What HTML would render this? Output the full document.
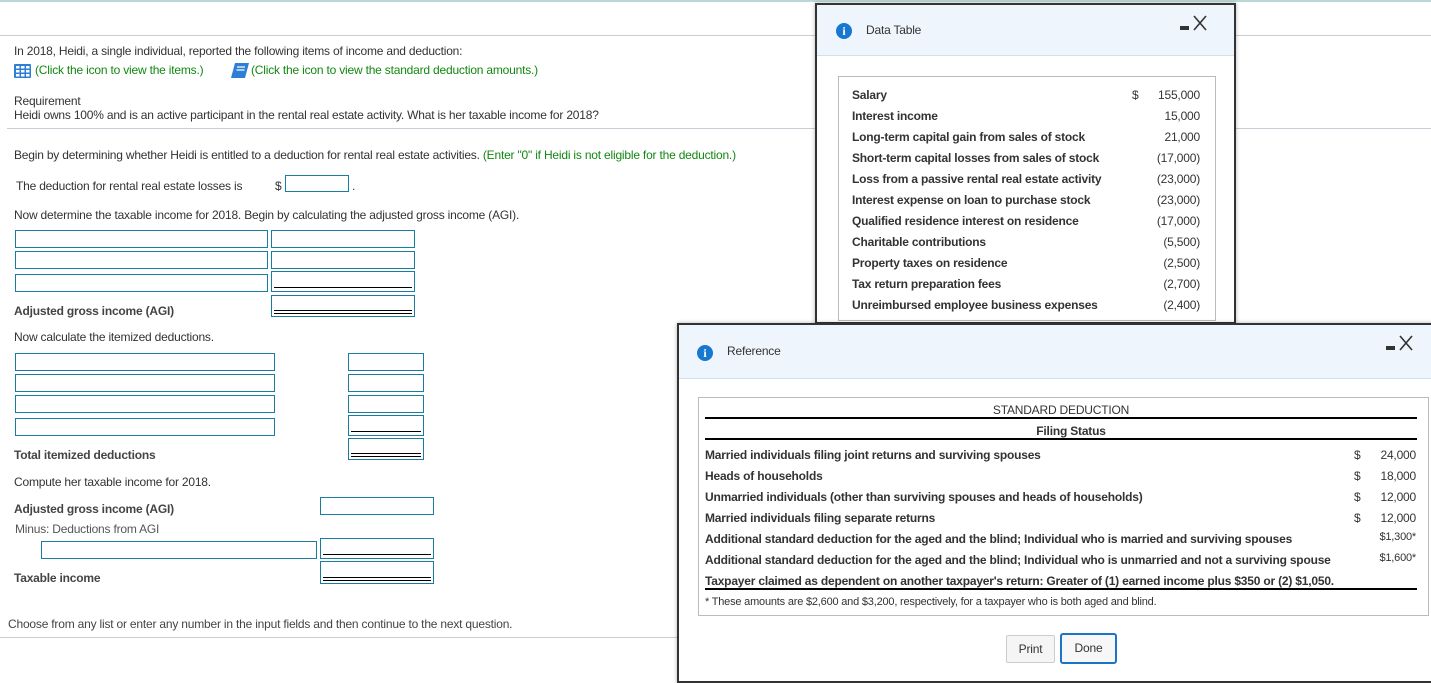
<!DOCTYPE html>
<html><head><meta charset="utf-8"><style>
*{margin:0;padding:0;box-sizing:border-box}
body{width:1431px;height:674px;position:relative;overflow:hidden;background:#fff;font-family:"Liberation Sans",sans-serif;font-size:12px;color:#333;letter-spacing:-0.2px}
.a{position:absolute;white-space:nowrap}
.b{position:absolute;border:1px solid #1a7ca0;background:#fff}
.u::after{content:"";position:absolute;left:2px;right:2px;bottom:3px;border-bottom:1px solid #000}
.d::after{content:"";position:absolute;left:2px;right:2px;bottom:2px;height:2px;border-top:1px solid #000;border-bottom:1px solid #000}
.g{color:#118811}
.bo{font-weight:bold;color:#444}
.hl{position:absolute;height:1px;background:#c9ccd4}
.dlg{position:absolute;background:#fff;border:2px solid #333;box-shadow:0 0 4px rgba(0,0,0,.3)}
.hdr{position:absolute;left:0;right:0;top:0;background:#eff5fd;border-bottom:1px solid #cfe0ee}
.ic{position:absolute;width:16px;height:16px;border-radius:50%;background:#1777d1;color:#fff;font:bold 12px "Liberation Serif",serif;text-align:center;line-height:16px;letter-spacing:0}
.tb{position:absolute;border:1px solid #bbb}
.r{position:absolute;font-size:12px;color:#333;white-space:nowrap}
</style></head><body>
<div class="a" style="left:0;top:0;width:1431px;height:2px;background:#b9d9d6"></div>
<div class="hl" style="left:0;top:35px;width:1431px"></div>
<div class="a" style="left:14px;top:44px">In 2018, Heidi, a single individual, reported the following items of income and deduction:</div>
<svg class="a" style="left:14px;top:64px" width="17" height="14"><rect x="0" y="0" width="17" height="14" rx="1" fill="#2d7fd6"/><g fill="#fff"><rect x="2" y="2" width="3.5" height="2.5"/><rect x="7" y="2" width="3.5" height="2.5"/><rect x="12" y="2" width="3.5" height="2.5"/><rect x="2" y="6" width="3.5" height="2.5"/><rect x="7" y="6" width="3.5" height="2.5"/><rect x="12" y="6" width="3.5" height="2.5"/><rect x="2" y="10" width="3.5" height="2.5"/><rect x="7" y="10" width="3.5" height="2.5"/><rect x="12" y="10" width="3.5" height="2.5"/></g></svg>
<div class="a g" style="left:35px;top:63px">(Click the icon to view the items.)</div>
<svg class="a" style="left:230px;top:62px" width="20" height="18"><path d="M5 1h14l-4 15H1z" fill="#2d7fd6"/><path d="M7 5h8M6.5 8h8" stroke="#fff" stroke-width="1.2"/></svg>
<div class="a g" style="left:251px;top:63px">(Click the icon to view the standard deduction amounts.)</div>
<div class="a" style="left:14px;top:94px">Requirement</div>
<div class="a" style="left:14px;top:108px">Heidi owns 100% and is an active participant in the rental real estate activity. What is her taxable income for 2018?</div>
<div class="hl" style="left:7px;top:128px;width:1424px"></div>
<div class="a" style="left:14px;top:148px">Begin by determining whether Heidi is entitled to a deduction for rental real estate activities. <span class="g">(Enter "0" if Heidi is not eligible for the deduction.)</span></div>
<div class="a" style="left:16px;top:179px">The deduction for rental real estate losses is</div>
<div class="a" style="left:275px;top:179px">$</div>
<div class="b" style="left:285px;top:175px;width:64px;height:17px"></div>
<div class="a" style="left:352px;top:179px">.</div>
<div class="a" style="left:14px;top:208px">Now determine the taxable income for 2018. Begin by calculating the adjusted gross income (AGI).</div>
<div class="b" style="left:15px;top:230px;width:253px;height:18px"></div>
<div class="b" style="left:271px;top:230px;width:144px;height:18px"></div>
<div class="b" style="left:15px;top:251px;width:253px;height:18px"></div>
<div class="b" style="left:271px;top:251px;width:144px;height:18px"></div>
<div class="b" style="left:15px;top:274px;width:253px;height:18px"></div>
<div class="b u" style="left:271px;top:271px;width:144px;height:21px"></div>
<div class="a bo" style="left:14px;top:304px">Adjusted gross income (AGI)</div>
<div class="b d" style="left:271px;top:295px;width:144px;height:22px"></div>
<div class="a" style="left:14px;top:330px">Now calculate the itemized deductions.</div>
<div class="b" style="left:15px;top:353px;width:260px;height:18px"></div>
<div class="b" style="left:348px;top:353px;width:76px;height:18px"></div>
<div class="b" style="left:15px;top:374px;width:260px;height:18px"></div>
<div class="b" style="left:348px;top:374px;width:76px;height:18px"></div>
<div class="b" style="left:15px;top:395px;width:260px;height:18px"></div>
<div class="b" style="left:348px;top:395px;width:76px;height:18px"></div>
<div class="b" style="left:15px;top:418px;width:260px;height:18px"></div>
<div class="b u" style="left:348px;top:415px;width:76px;height:21px"></div>
<div class="a bo" style="left:14px;top:448px">Total itemized deductions</div>
<div class="b d" style="left:348px;top:438px;width:76px;height:22px"></div>
<div class="a" style="left:14px;top:475px">Compute her taxable income for 2018.</div>
<div class="a bo" style="left:14px;top:502px">Adjusted gross income (AGI)</div>
<div class="b" style="left:320px;top:497px;width:114px;height:18px"></div>
<div class="a" style="left:15px;top:522px;color:#555">Minus: Deductions from AGI</div>
<div class="b" style="left:41px;top:541px;width:276px;height:18px"></div>
<div class="b u" style="left:320px;top:538px;width:114px;height:21px"></div>
<div class="a bo" style="left:14px;top:571px">Taxable income</div>
<div class="b d" style="left:320px;top:561px;width:114px;height:23px"></div>
<div class="a" style="left:8px;top:617px;color:#444">Choose from any list or enter any number in the input fields and then continue to the next question.</div>
<div class="hl" style="left:0;top:637px;width:680px"></div>

<div class="dlg" style="left:815px;top:3px;width:421px;height:321px">
 <div class="hdr" style="height:51px"></div>
 <div class="ic" style="left:19px;top:18px">i</div>
 <div class="a" style="left:49px;top:18px">Data Table</div>
 <div class="a" style="left:363px;top:21px;width:9px;height:4px;background:#333"></div>
 <svg class="a" style="left:375px;top:9px" width="16" height="18"><path d="M2 2L14 16M14 2L2 16" stroke="#333" stroke-width="1.6" fill="none"/></svg>
 <div class="tb" style="left:21px;top:71px;width:378px;height:245px"></div>
</div>
<div class="a" style="left:838px;top:76px;width:377px;height:250px;font-size:12px">
<div class="r bo" style="left:14px;top:12px;color:#333">Salary</div><div class="r" style="left:294px;top:12px">$</div><div class="r" style="right:15px;top:12px">155,000</div>
<div class="r" style="left:14px;top:33px;font-weight:bold">Interest income</div><div class="r" style="right:15px;top:33px">15,000</div>
<div class="r" style="left:14px;top:54px;font-weight:bold">Long-term capital gain from sales of stock</div><div class="r" style="right:15px;top:54px">21,000</div>
<div class="r" style="left:14px;top:75px;font-weight:bold">Short-term capital losses from sales of stock</div><div class="r" style="right:15px;top:75px">(17,000)</div>
<div class="r" style="left:14px;top:96px;font-weight:bold">Loss from a passive rental real estate activity</div><div class="r" style="right:15px;top:96px">(23,000)</div>
<div class="r" style="left:14px;top:117px;font-weight:bold">Interest expense on loan to purchase stock</div><div class="r" style="right:15px;top:117px">(23,000)</div>
<div class="r" style="left:14px;top:138px;font-weight:bold">Qualified residence interest on residence</div><div class="r" style="right:15px;top:138px">(17,000)</div>
<div class="r" style="left:14px;top:159px;font-weight:bold">Charitable contributions</div><div class="r" style="right:15px;top:159px">(5,500)</div>
<div class="r" style="left:14px;top:180px;font-weight:bold">Property taxes on residence</div><div class="r" style="right:15px;top:180px">(2,500)</div>
<div class="r" style="left:14px;top:201px;font-weight:bold">Tax return preparation fees</div><div class="r" style="right:15px;top:201px">(2,700)</div>
<div class="r" style="left:14px;top:222px;font-weight:bold">Unreimbursed employee business expenses</div><div class="r" style="right:15px;top:222px">(2,400)</div>
</div>

<div class="dlg" style="left:677px;top:323px;width:760px;height:360px">
 <div class="hdr" style="height:54px"></div>
 <div class="ic" style="left:18px;top:20px">i</div>
 <div class="a" style="left:48px;top:19px">Reference</div>
 <div class="a" style="left:707px;top:21px;width:9px;height:4px;background:#333"></div>
 <svg class="a" style="left:719px;top:9px" width="16" height="18"><path d="M2 2L14 16M14 2L2 16" stroke="#333" stroke-width="1.6" fill="none"/></svg>
 <div class="tb" style="left:19px;top:72px;width:731px;height:219px"></div>
</div>
<div class="a" style="left:705px;top:397px;width:712px;height:220px">
 <div class="r" style="left:0;right:0;top:6px;text-align:center">STANDARD DEDUCTION</div>
 <div class="a" style="left:0;right:0;top:20px;height:2px;background:#000"></div>
 <div class="r" style="left:0;right:0;top:27px;text-align:center;font-weight:bold;padding-left:20px">Filing Status</div>
 <div class="a" style="left:0;right:0;top:41px;height:2px;background:#000"></div>
 <div class="r" style="left:0;top:51px;font-weight:bold">Married individuals filing joint returns and surviving spouses</div><div class="r" style="left:649px;top:51px">$</div><div class="r" style="right:1px;top:51px">24,000</div>
 <div class="r" style="left:0;top:72px;font-weight:bold">Heads of households</div><div class="r" style="left:649px;top:72px">$</div><div class="r" style="right:1px;top:72px">18,000</div>
 <div class="r" style="left:0;top:93px;font-weight:bold">Unmarried individuals (other than surviving spouses and heads of households)</div><div class="r" style="left:649px;top:93px">$</div><div class="r" style="right:1px;top:93px">12,000</div>
 <div class="r" style="left:0;top:114px;font-weight:bold">Married individuals filing separate returns</div><div class="r" style="left:649px;top:114px">$</div><div class="r" style="right:1px;top:114px">12,000</div>
 <div class="r" style="left:0;top:135px;font-weight:bold">Additional standard deduction for the aged and the blind; Individual who is married and surviving spouses</div><div class="r" style="right:1px;top:134px;font-size:11px">$1,300*</div>
 <div class="r" style="left:0;top:156px;font-weight:bold">Additional standard deduction for the aged and the blind; Individual who is unmarried and not a surviving spouse</div><div class="r" style="right:1px;top:155px;font-size:11px">$1,600*</div>
 <div class="r" style="left:0;top:177px;font-weight:bold">Taxpayer claimed as dependent on another taxpayer's return: Greater of (1) earned income plus $350 or (2) $1,050.</div>
 <div class="a" style="left:0;right:0;top:191px;height:2px;background:#000"></div>
 <div class="r" style="left:0;top:199px;font-size:11px">* These amounts are $2,600 and $3,200, respectively, for a taxpayer who is both aged and blind.</div>
</div>
<div class="a" style="left:1006px;top:635px;width:49px;height:28px;border:1px solid #ccc;border-radius:2px;background:#f5f5f5;text-align:center;line-height:26px">Print</div>
<div class="a" style="left:1060px;top:633px;width:57px;height:31px;border:2px solid #1c74c8;border-radius:3px;background:#f7f7f7;text-align:center;line-height:27px">Done</div>
</body></html>
